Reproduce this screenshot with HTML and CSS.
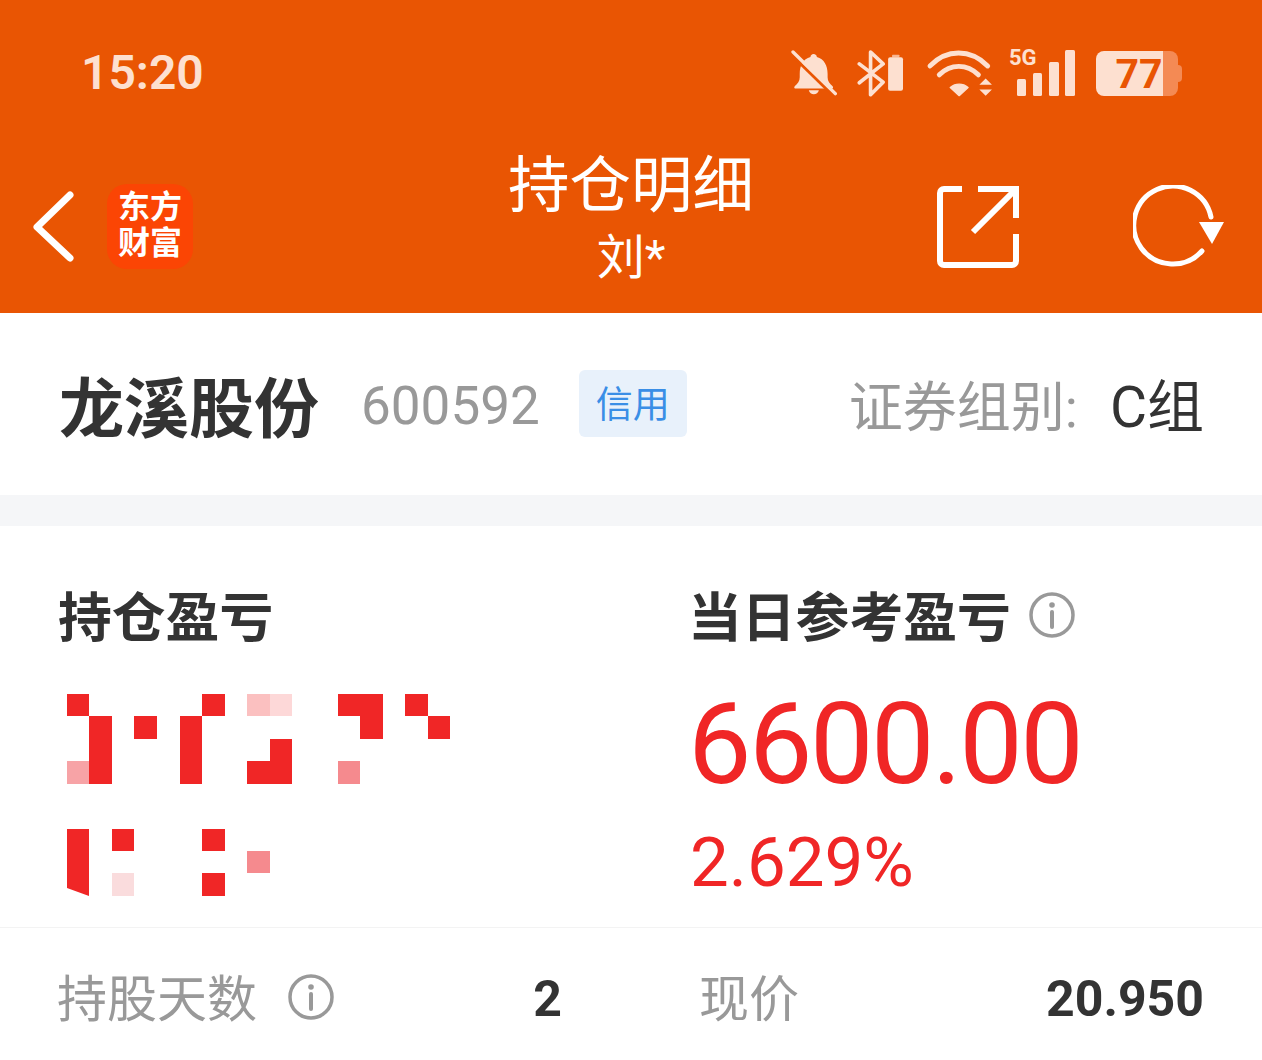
FILE: index.html
```html
<!DOCTYPE html>
<html lang="zh-CN">
<head>
  <meta charset="UTF-8">
  <title>持仓明细</title>
  <link rel="stylesheet" href="styles.css">
</head>
<body>
  <!-- 顶部橙色区域 -->
  <header class="header">
    <div class="status-bar">
      <div class="time">15:20</div>
      <div class="status-icons">
        <svg class="icon-bell" viewBox="60 55 140 140">
          <path d="M130 70c6 0 10 4 10 9 22 6 32 26 32 50v10c0 12 6 19 15 27 3 4 1 7-4 7H78c-5 0-7-3-4-7 9-8 15-15 15-27v-10c0-24 10-44 32-50 0-5 4-9 9-9z" fill="currentColor"/>
          <path d="M116 178h30c-2 8-8 12-15 12s-13-4-15-12z" fill="currentColor"/>
          <path d="M62 70 189 194" stroke="#e95503" stroke-width="9"/>
          <path d="M69 64 195 188" stroke="currentColor" stroke-width="10" stroke-linecap="round"/>
        </svg>
        <svg class="icon-bt" viewBox="260 55 142 145">
          <path d="M267 100 339 155 301 193V64L339 100 267 157" fill="none" stroke="currentColor" stroke-width="11" stroke-linejoin="round" stroke-linecap="round"/>
          <rect x="354" y="80" width="45" height="101" rx="6" fill="currentColor"/>
          <rect x="366" y="72" width="22" height="9" rx="2" fill="currentColor" opacity="0.7"/>
        </svg>
        <svg class="icon-wifi" viewBox="465 55 200 145">
          <path d="M476 106c50-52 122-52 174 0M504 133c34-34 84-34 118 0" fill="none" stroke="currentColor" stroke-width="15" stroke-linecap="round"/>
          <path d="M537 171c16-13 38-13 54 0l-27 25z" fill="currentColor" stroke="currentColor" stroke-width="4" stroke-linejoin="round"/>
          <path d="M644 144 663 163H625zM644 196 625 177H663z" fill="currentColor"/>
        </svg>
        <svg class="icon-signal" viewBox="0 -8 67 56">
          <text class="net-text" x="0" y="16">5G</text>
          <rect x="8" y="30" width="9" height="17" rx="1.500" fill="currentColor"/>
          <rect x="24" y="24" width="9" height="23" rx="1.500" fill="currentColor"/>
          <rect x="40" y="13" width="10" height="34" rx="1.500" fill="currentColor"/>
          <rect x="56" y="1" width="10" height="46" rx="1.500" fill="currentColor"/>
        </svg>
        <div class="battery">
          <div class="battery-fill">77</div>
          <div class="battery-rest"></div>
          <div class="battery-tip"></div>
        </div>
      </div>
    </div>
    <div class="nav-bar">
      <div class="nav-left">
        <svg class="icon-back" viewBox="0 0 50 80">
          <path d="M40 8 7 40 40 71" fill="none" stroke="#fff" stroke-width="7" stroke-linecap="round" stroke-linejoin="round"/>
        </svg>
        <div class="logo">东方<br>财富</div>
      </div>
      <div class="nav-title">
        <div class="title">持仓明细</div>
        <div class="subtitle">刘*</div>
      </div>
      <div class="nav-right">
        <svg class="icon-share" viewBox="0 0 82 82">
          <path d="M25 3H7a4 4 0 0 0-4 4v68a4 4 0 0 0 4 4h68a4 4 0 0 0 4-4V48" fill="none" stroke="#fff" stroke-width="6"/>
          <path d="M41 3H79V32M79 3 36 46" fill="none" stroke="#fff" stroke-width="6"/>
        </svg>
        <svg class="icon-refresh" viewBox="0 0 92 84">
          <path d="M69 66A39 39 0 1 1 78 32" fill="none" stroke="#fff" stroke-width="5" stroke-linecap="round"/>
          <path d="M66 37H91L79 59z" fill="#fff"/>
        </svg>
      </div>
    </div>
  </header>

  <!-- 股票信息 -->
  <section class="stock-row">
    <div class="stock-name">龙溪股份</div>
    <div class="stock-code">600592</div>
    <div class="stock-tag">信用</div>
    <div class="stock-group">证券组别:<span class="group-value">C组</span></div>
  </section>

  <div class="divider"></div>

  <!-- 盈亏 -->
  <section class="profit">
    <div class="profit-col">
      <div class="profit-label">持仓盈亏</div>
      <!-- 打码区域 -->
      <svg class="mosaic mosaic-a" viewBox="0 0 383 90" shape-rendering="crispEdges">
        <g fill="#f02626">
          <rect x="0" y="0" width="22" height="22"/>
          <rect x="22" y="22" width="23" height="68"/>
          <rect x="67" y="22" width="23" height="23"/>
          <rect x="113" y="22" width="22" height="68"/>
          <rect x="135" y="0" width="23" height="22"/>
          <rect x="180" y="67" width="45" height="23"/>
          <rect x="203" y="45" width="22" height="22"/>
          <rect x="271" y="0" width="45" height="22"/>
          <rect x="293" y="22" width="23" height="23"/>
          <rect x="338" y="0" width="23" height="22"/>
          <rect x="361" y="22" width="22" height="23"/>
        </g>
        <rect x="0" y="67" width="22" height="23" fill="#f7a3a6"/>
        <rect x="180" y="0" width="23" height="22" fill="#fbc0c0"/>
        <rect x="203" y="0" width="22" height="22" fill="#fdd8d8"/>
        <rect x="271" y="67" width="22" height="23" fill="#f58a8e"/>
      </svg>
      <svg class="mosaic mosaic-b" viewBox="0 0 203 67">
        <path d="M0 0H22V67L0 59z" fill="#f02626"/>
        <g fill="#f02626" shape-rendering="crispEdges">
          <rect x="45" y="0" width="22" height="22"/>
          <rect x="135" y="0" width="23" height="22"/>
          <rect x="135" y="44" width="23" height="23"/>
        </g>
        <rect x="180" y="22" width="23" height="22" fill="#f58a8e" shape-rendering="crispEdges"/>
        <rect x="45" y="44" width="22" height="23" fill="#fadcdd" shape-rendering="crispEdges"/>
      </svg>
    </div>
    <div class="profit-col">
      <div class="profit-label">当日参考盈亏
        <svg class="icon-info" viewBox="0 0 46 46">
          <circle cx="23" cy="23" r="21" fill="none" stroke="#999" stroke-width="3.500"/>
          <circle cx="23" cy="13" r="2.800" fill="#999"/>
          <path d="M23 20V35" stroke="#999" stroke-width="4" stroke-linecap="round"/>
        </svg>
      </div>
      <div class="profit-value">6600.00</div>
      <div class="profit-rate">2.629%</div>
    </div>
  </section>

  <!-- 明细 -->
  <section class="detail-row">
    <div class="detail-item">
      <div class="detail-label">持股天数
        <svg class="icon-info" viewBox="0 0 46 46">
          <circle cx="23" cy="23" r="21" fill="none" stroke="#999" stroke-width="3.500"/>
          <circle cx="23" cy="13" r="2.800" fill="#999"/>
          <path d="M23 20V35" stroke="#999" stroke-width="4" stroke-linecap="round"/>
        </svg>
      </div>
      <div class="detail-value">2</div>
    </div>
    <div class="detail-item">
      <div class="detail-label">现价</div>
      <div class="detail-value">20.950</div>
    </div>
  </section>
</body>
</html>
```

FILE: styles.css
```css
body {
  margin: 0;
  height: 1060px;
  overflow: hidden;
  background-color: #fff;
  color: #333;
  font-family: Roboto, "Noto Sans CJK SC", sans-serif;
}

/* 顶部 */
.header {
  height: 313px;
  background-color: #e95503;
  color: #fff;
}

.status-bar {
  height: 145px;
  display: flex;
  justify-content: space-between;
  align-items: center;
  padding: 0 79px 0 81px;
  color: #fde0d0;
}

.time {
  font-size: 48px;
  font-weight: 600;
  line-height: 54px;
}

.status-icons {
  display: flex;
  align-items: center;
}

.icon-bell {
  width: 47px;
  height: 47px;
  margin-right: 20px;
}

.icon-bt {
  width: 47px;
  height: 48px;
  margin-right: 22px;
}

.icon-wifi {
  width: 67px;
  height: 48px;
  margin-right: 16px;
}

.icon-signal {
  width: 67px;
  height: 56px;
  margin: -8px 20px 0 0;
}

.net-text {
  font-size: 22px;
  font-weight: 700;
  fill: currentColor;
}

/* 电量 */
.battery {
  display: flex;
  align-items: center;
  width: 87px;
  height: 45px;
  margin-top: 2px;
}

.battery-fill {
  width: 67px;
  height: 45px;
  border-radius: 8px 0 0 8px;
  background-color: #fde0d0;
  color: #e95503;
  font-size: 41px;
  font-weight: 700;
  line-height: 47px;
  text-align: center;
  padding-left: 19px;
  box-sizing: border-box;
}

.battery-rest {
  width: 15px;
  height: 45px;
  border-radius: 0 8px 8px 0;
  background-color: #f48a54;
}

.battery-tip {
  width: 4px;
  height: 17px;
  border-radius: 0 4px 4px 0;
  background-color: #f48a54;
}

.nav-bar {
  height: 168px;
  display: grid;
  grid-template-columns: 1fr auto 1fr;
  align-items: center;
}

.nav-left {
  display: flex;
  align-items: center;
  padding: 0 0 5px 30px;
}

.icon-back {
  width: 50px;
  height: 80px;
  margin-right: 27px;
}

.logo {
  flex: none;
  width: 86px;
  height: 85px;
  box-sizing: border-box;
  padding-top: 5px;
  border-radius: 20px;
  background-color: #fb4504;
  font-size: 32px;
  font-weight: 700;
  line-height: 36px;
  text-align: center;
}

.nav-title {
  text-align: center;
  margin-bottom: 23px;
}

.title {
  font-size: 61.500px;
  line-height: 76px;
}

.subtitle {
  font-size: 48px;
  line-height: 58px;
  margin-top: 5px;
}

.nav-right {
  display: flex;
  justify-content: flex-end;
  align-items: center;
  padding: 0 37px 5px 0;
}

.icon-share {
  width: 82px;
  height: 82px;
  margin-right: 114px;
}

.icon-refresh {
  width: 92px;
  height: 84px;
}

/* 股票信息 */
.stock-row {
  height: 182px;
  display: flex;
  align-items: center;
  padding: 0 58px 0 59px;
}

.stock-name {
  font-size: 65px;
  font-weight: 700;
  margin-right: 42px;
}

.stock-code {
  font-size: 53px;
  color: #999;
  margin: 4px 39px 0 0;
}

.stock-tag {
  width: 108px;
  height: 67px;
  border-radius: 6px;
  background-color: #e8f1fb;
  color: #3a8ee6;
  font-size: 37px;
  line-height: 71px;
  text-align: center;
  margin-bottom: 2px;
}

.stock-group {
  margin: 0 0 4px auto;
  font-size: 54px;
  color: #999;
}

.group-value {
  color: #333;
  font-size: 57px;
  margin-left: 32px;
}

.divider {
  height: 31px;
  background-color: #f5f6f8;
}

/* 盈亏 */
.profit {
  height: 402px;
  box-sizing: border-box;
  display: grid;
  grid-template-columns: 630px 1fr;
  padding: 52px 0 0 58px;
  border-bottom: 1px solid #f3f3f3;
}

.profit-label {
  display: flex;
  align-items: center;
  height: 70px;
  font-size: 53.800px;
  font-weight: 700;
}

.profit-label .icon-info {
  margin: 4px 0 0 18px;
}

.icon-info {
  width: 46px;
  height: 46px;
}

.mosaic {
  display: block;
  margin-left: 9px;
}

.mosaic-a {
  width: 383px;
  height: 90px;
  margin-top: 46px;
}

.mosaic-b {
  width: 203px;
  height: 67px;
  margin-top: 45px;
}

.profit-value {
  color: #f02626;
  font-size: 113px;
  letter-spacing: -2.500px;
  line-height: 124px;
  margin-top: 35px;
}

.profit-rate {
  color: #f02626;
  font-size: 69px;
  line-height: 80px;
  margin: 16px 0 0 2px;
}

/* 明细 */
.detail-row {
  display: grid;
  grid-template-columns: 505px 505px;
  justify-content: space-between;
  padding: 38px 58px 0 57px;
}

.detail-item {
  display: flex;
  justify-content: space-between;
  align-items: center;
  height: 62px;
}

.detail-label {
  display: flex;
  align-items: center;
  font-size: 50px;
  color: #999;
  margin-bottom: 4px;
}

.detail-label .icon-info {
  margin: 4px 0 0 31px;
}

.detail-value {
  font-size: 50px;
  font-weight: 700;
  margin-top: 4px;
}
```
